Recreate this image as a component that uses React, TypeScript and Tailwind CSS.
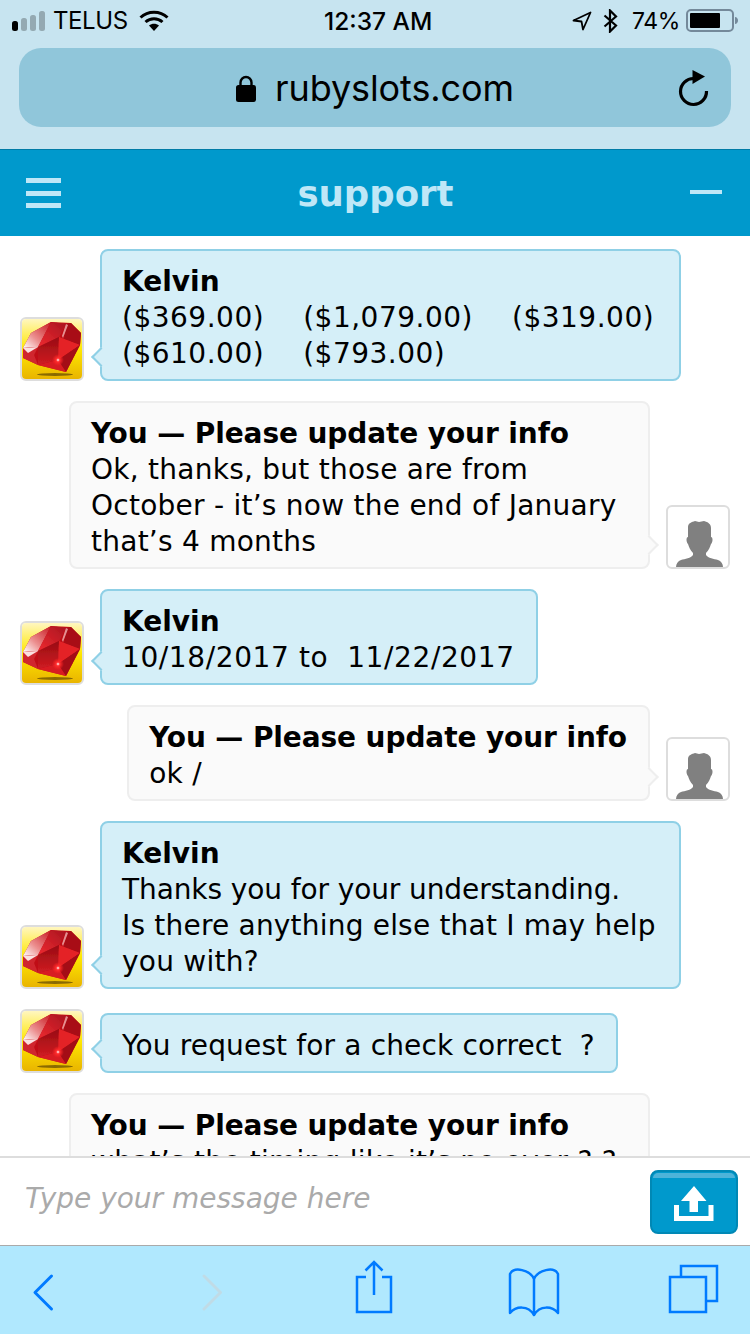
import React from "react";

function Ruby({ id }: { id: string }) {
  return (
    <svg viewBox="0 0 60 60" className="block h-full w-full">
      <defs>
        <linearGradient id={`gold${id}`} x1="0" y1="0" x2="0" y2="1">
          <stop offset="0" stopColor="#fff6c0" />
          <stop offset="0.5" stopColor="#ffe800" />
          <stop offset="1" stopColor="#e9b400" />
        </linearGradient>
        <linearGradient id={`sheen${id}`} x1="0" y1="1" x2="1" y2="0">
          <stop offset="0" stopColor="#ffffff" />
          <stop offset="0.4" stopColor="#ec9090" />
          <stop offset="1" stopColor="#c81820" />
        </linearGradient>
        <linearGradient id={`table${id}`} x1="0" y1="1" x2="1" y2="0">
          <stop offset="0" stopColor="#ee2a30" />
          <stop offset="1" stopColor="#a81420" />
        </linearGradient>
        <linearGradient id={`low${id}`} x1="0" y1="0" x2="0" y2="1">
          <stop offset="0" stopColor="#980c14" />
          <stop offset="1" stopColor="#d01c22" />
        </linearGradient>
        <radialGradient id={`spark${id}`} cx="0.5" cy="0.5" r="0.5">
          <stop offset="0" stopColor="#ffffff" />
          <stop offset="0.3" stopColor="#ff3030" />
          <stop offset="1" stopColor="#ff2020" stopOpacity="0" />
        </radialGradient>
        <filter id={`soft${id}`} x="-5%" y="-5%" width="110%" height="110%">
          <feGaussianBlur stdDeviation="0.7" />
        </filter>
      </defs>
      <rect width="60" height="60" fill={`url(#gold${id})`} />
      <ellipse cx="33" cy="55.500" rx="18" ry="1.500" fill="#4a3500" opacity="0.6" filter={`url(#soft${id})`} />
      <g filter={`url(#soft${id})`}>
        <polygon points="9,14 29,3 49,4 59,14 58,26 44,53 16,46 1,39 1,29" fill="#c01018" />
        <polygon points="9,14 1,29 16,28 29,3" fill={`url(#sheen${id})`} />
        <polygon points="29,3 16,28 37,18 44,5" fill={`url(#table${id})`} />
        <polygon points="44,5 49,4 59,14 58,26 42,20" fill="#a80c14" />
        <polygon points="44,5 46,6 41,19 40,17" fill="#f0b0b0" opacity="0.8" />
        <polygon points="1,29 16,28 12,36 16,46 1,39" fill="#d0282e" />
        <polygon points="1,29 16,28 6,34" fill="#fbe0e0" />
        <polygon points="16,28 37,18 36,41 16,46" fill={`url(#low${id})`} />
        <polygon points="37,18 58,26 36,41" fill="#e42428" />
        <polygon points="58,26 44,53 36,41" fill="#a40c14" />
        <polygon points="16,46 36,41 44,53" fill="#d81e24" />
      </g>
      <circle cx="36" cy="41" r="6" fill={`url(#spark${id})`} />
    </svg>
  );
}

function Person() {
  return (
    <svg viewBox="0 0 60 60" className="block h-full w-full">
      <path
        fill="#808080"
        d="M20 20C20 16 24 15 27 14L31 15 36 14C40 15 43 17 43 21L43 30C45 30 45 35 43 37 42 40 41 43 38 46L38 48C40 51 46 52 50 53 53 54 55 57 55 60L8 60C8 57 10 54 13 53 17 52 23 51 25 48L25 46C22 43 21 40 20 37 18 35 18 30 20 30Z"
      />
    </svg>
  );
}

function Avatar({ kind, id = "" }: { kind: "ruby" | "person"; id?: string }) {
  return (
    <div className="h-16 w-16 shrink-0 overflow-hidden rounded-md border-2 border-[#dddddd] bg-white">
      {kind === "ruby" ? <Ruby id={id} /> : <Person />}
    </div>
  );
}

function Kelvin({ children, id, full }: { children: React.ReactNode; id: string; full?: boolean }) {
  return (
    <div className="flex items-end gap-4 pl-5">
      <Avatar kind="ruby" id={id} />
      <div
        className={
          full
            ? "relative w-[581px] rounded-lg border-2 border-[#8fd0e6] bg-[#d5eff8] pb-[7px] pl-[20px] pr-[10px] pt-[13px]"
            : "relative w-fit rounded-lg border-2 border-[#8fd0e6] bg-[#d5eff8] pb-[7px] pl-[20px] pr-[21px] pt-[13px]"
        }
      >
        <span className="absolute bottom-[15px] left-[-8px] h-[14px] w-[14px] rotate-45 border-b-2 border-l-2 border-[#8fd0e6] bg-[#d5eff8]" />
        <div className="relative whitespace-pre-wrap">{children}</div>
      </div>
    </div>
  );
}

function You({ children, full }: { children: React.ReactNode; full?: boolean }) {
  return (
    <div className="flex items-end justify-end gap-4 pr-5">
      <div
        className={
          full
            ? "relative w-[581px] rounded-lg border-2 border-[#eeeeee] bg-[#fafafa] pb-[7px] pl-[20px] pr-[21px] pt-[13px]"
            : "relative w-fit rounded-lg border-2 border-[#eeeeee] bg-[#fafafa] pb-[7px] pl-[20px] pr-[21px] pt-[13px]"
        }
      >
        <span className="absolute bottom-[15px] right-[-8px] h-[14px] w-[14px] rotate-45 border-r-2 border-t-2 border-[#eeeeee] bg-[#fafafa]" />
        <div className="relative whitespace-pre-wrap">
          <div className="font-bold tracking-[-0.1px]">You — Please update your info</div>
          {children}
        </div>
      </div>
      <Avatar kind="person" />
    </div>
  );
}

export default function App() {
  return (
    <div className="flex h-[1334px] w-[750px] flex-col overflow-hidden bg-white font-['DejaVu_Sans',sans-serif] text-[28px] leading-[36px] tracking-[0.25px] text-black">
      <div className="h-[149px] shrink-0 bg-[#c7e4f0] font-['Inter',sans-serif] tracking-normal">
        <div className="relative flex h-[48px] items-center justify-between pb-[6px] pl-3 pr-[11px]">
          <div className="flex items-center">
            <svg width="34" height="22" viewBox="0 0 34 22" className="mt-[-1px]">
              <rect x="0" y="11" width="6" height="10" rx="2.500" fill="#000" />
              <rect x="9" y="8" width="6" height="13" rx="2.500" fill="#94a9b2" />
              <rect x="18" y="5" width="6" height="16" rx="2.500" fill="#94a9b2" />
              <rect x="27" y="1" width="6" height="20" rx="2.500" fill="#94a9b2" />
            </svg>
            <span className="ml-[7px] text-[24px] leading-[30px] tracking-[-0.4px]">TELUS</span>
            <svg width="30" height="22" viewBox="0 0 30 22" className="ml-[11px]">
              <path d="M1.500 7.500C9 .5 21 .5 28.500 7.500" fill="none" stroke="#000" strokeWidth="3" />
              <path d="M6.500 12C11.500 7.500 18.500 7.500 23.500 12" fill="none" stroke="#000" strokeWidth="3" />
              <path d="M10 15.500C13 13 17 13 20 15.500L15 21z" fill="#000" />
            </svg>
          </div>
          <span className="absolute left-[324px] top-[6px] text-[24.500px] font-medium leading-[30px]">12:37 AM</span>
          <div className="flex items-center">
            <svg width="20" height="20" viewBox="0 0 20 20">
              <path d="M1.500 9.500L18.500 1.500 11 18.500 9.500 10.500z" fill="none" stroke="#000" strokeWidth="1.800" strokeLinejoin="round" />
            </svg>
            <svg width="15" height="24" viewBox="0 0 15 24" className="ml-[11px]">
              <path d="M1.500 6.500L13 16.500 7 22.500V1.500L13 7.500 1.500 17.500" fill="none" stroke="#000" strokeWidth="2.200" />
            </svg>
            <span className="ml-[14px] text-[23px] leading-[30px] tracking-[-0.4px]">74%</span>
            <svg width="53" height="24" viewBox="0 0 53 24" className="ml-[6px]">
              <rect x="1" y="1" width="46" height="21" rx="4" fill="none" stroke="#74899a" strokeWidth="2" />
              <rect x="4" y="4" width="30" height="15" rx="1" fill="#000" />
              <path d="M49 8c2 0 3 2 3 3.500S51 15 49 15z" fill="#74899a" />
            </svg>
          </div>
        </div>
        <div className="relative mx-[19px] flex h-[79px] items-center justify-center rounded-[22px] bg-[#90c6da]">
          <svg width="20" height="28" viewBox="0 0 20 28" className="mr-[19px] mt-[2px]">
            <path d="M4.500 12V7.500a5.500 5.500 0 0 1 11 0V12" fill="none" stroke="#000" strokeWidth="2.400" />
            <rect x="0" y="10" width="20" height="17" rx="2.500" fill="#000" />
          </svg>
          <span className="text-[36px] leading-[40px] tracking-[-0.1px]">rubyslots.com</span>
          <svg width="34" height="38" viewBox="0 0 34 38" className="absolute right-[20px] top-[21px]">
            <path d="M17 9.500A13 13 0 1 0 29.500 22" fill="none" stroke="#000" strokeWidth="3.200" />
            <path d="M15.500 1L28 7.500 15.500 15z" fill="#000" />
          </svg>
        </div>
      </div>

      <header className="flex h-[87px] shrink-0 items-center justify-between border-t border-[#007ba6] bg-[#0099cc] pl-[26px] pr-[28px]">
        <div className="flex w-[35px] flex-col gap-[7.500px]">
          <div className="h-[5px] bg-[#bfe7f7]" />
          <div className="h-[5px] bg-[#bfe7f7]" />
          <div className="h-[5px] bg-[#bfe7f7]" />
        </div>
        <span className="mt-[2px] text-[35.500px] font-bold leading-[40px] tracking-normal text-[#bfe7f7]">support</span>
        <div className="mb-[3px] h-[4px] w-[32px] bg-[#bfe7f7]" />
      </header>

      <main className="flex min-h-0 flex-1 flex-col gap-5 overflow-hidden pt-[13px]">
        <Kelvin id="a" full>
          <div className="font-bold tracking-normal">Kelvin</div>
          <div className="flex flex-wrap gap-x-[39px] tracking-[0.5px]">
            <span>($369.00)</span>
            <span>($1,079.00)</span>
            <span>($319.00)</span>
            <span>($610.00)</span>
            <span>($793.00)</span>
          </div>
        </Kelvin>
        <You full>
          Ok, thanks, but those are from{"\n"}October - it’s now the end of January{"\n"}that’s 4 months
        </You>
        <Kelvin id="b">
          <div className="font-bold tracking-normal">Kelvin</div>
          <span className="tracking-[0.6px]">10/18/2017 to  11/22/2017</span>
        </Kelvin>
        <You>ok /</You>
        <Kelvin id="c" full>
          <div className="font-bold tracking-normal">Kelvin</div>
          <div className="tracking-[-0.1px]">Thanks you for your understanding.</div>
          <div className="tracking-[0.2px]">Is there anything else that I may help</div>
          you with?
        </Kelvin>
        <Kelvin id="d">
          <span className="tracking-[0.15px]">You request for a check correct  ?</span>
        </Kelvin>
        <You full>
          <div>what’s the timing like it’s no over ? ?</div>
          <div className="h-[72px]" />
        </You>
      </main>

      <div className="flex h-[89px] shrink-0 items-center justify-between border-t-2 border-[#dddddd] bg-white pl-[25px] pr-[12px]">
        <span className="mb-[6px] text-[28px] italic tracking-normal text-[#aaaaaa]">Type your message here</span>
        <button className="relative flex h-16 w-[88px] items-center justify-center rounded-lg border-2 border-[#0088b5] bg-[#0099cc]">
          <span className="absolute left-[1px] right-[1px] top-[1px] h-[5px] rounded-t-md bg-[#4db3d9]" />
          <svg width="40" height="36" viewBox="0 0 40 36" className="relative mt-[4px]">
            <path d="M20 0L32.500 15H24V26H15.500V15H7z" fill="#fff" />
            <path d="M2.500 19V32.500H37V19" fill="none" stroke="#fff" strokeWidth="5" />
          </svg>
        </button>
      </div>

      <nav className="relative h-[89px] shrink-0 border-t border-[#aaaaaa] bg-[#b0e8fe]">
        <svg className="absolute inset-0" width="750" height="88" viewBox="0 1246 750 88" fill="none" stroke="#007aff" strokeWidth="2.500">
          <path d="M51.500 1276L35 1292.500 51.500 1309" strokeWidth="3" strokeLinecap="round" strokeLinejoin="round" />
          <path d="M204 1276L220.500 1292.500 204 1309" stroke="#c0dbe6" strokeWidth="3" strokeLinecap="round" strokeLinejoin="round" />
          <path d="M366 1277H357V1312H391V1277H382" />
          <path d="M374 1295V1263M365.500 1270.500L374 1262 382.500 1270.500" />
          <path d="M534 1279C530 1270 514 1266 510 1274V1313C516 1306 528 1305 534 1315 540 1305 552 1306 558 1313V1274C554 1266 538 1270 534 1279V1314" strokeLinejoin="round" />
          <path d="M670 1277H706V1312H670z" />
          <path d="M681 1276V1266H717V1301H707" />
        </svg>
      </nav>
    </div>
  );
}
